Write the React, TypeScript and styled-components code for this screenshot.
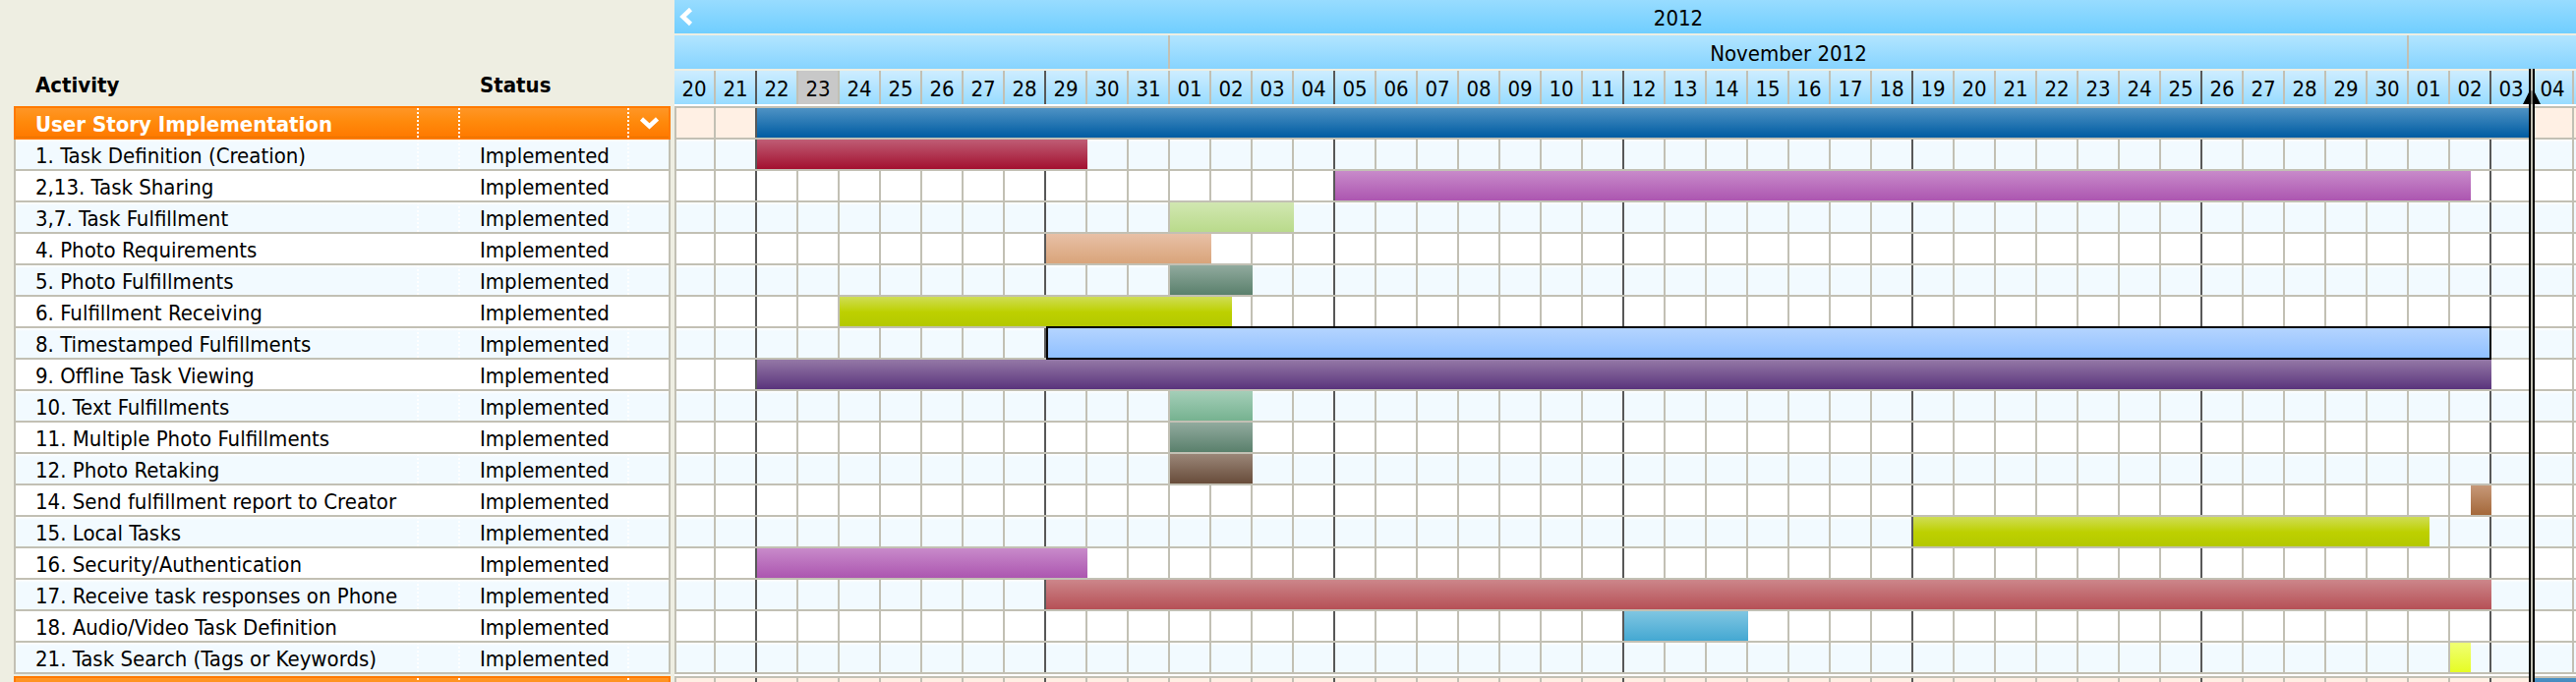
import React from 'react';
import styled, { createGlobalStyle } from 'styled-components';

const DAY = 42;
const LINE = '#c2c0b4';
const WEEK = '#585858';
const PAPER = '#eeeee2';
const GROUP = '#ff7a00';
const GROUP_FILL = 'linear-gradient(#ff9626, #ff8a0c 45%, #ff7a00 96%, #e87400 97%)';
const TINT_FILL = 'linear-gradient(#fff, #f2faff 3px)';

const Global = createGlobalStyle`
  * { box-sizing: border-box; }
  body {
    margin: 0;
    background: ${PAPER};
    color: #000;
    font: 22px/27px "DejaVu Sans Condensed", "DejaVu Sans", sans-serif;
    font-stretch: condensed;
  }
`;

const Page = styled.main`
  display: flex;
  align-items: flex-start;
  height: 100vh;
  overflow: hidden;
  padding-left: 14px;
`;

const Activities = styled.table`
  flex: none;
  width: 668px;
  margin-right: 4px;
  border-collapse: separate;
  border-spacing: 0;
  table-layout: fixed;
  td, th { padding: 0; text-align: left; white-space: nowrap; }
`;

const NameCol = styled.col`
  width: 410px;
`;

const GapCol = styled.col`
  width: 42px;
`;

const StatusCol = styled.col`
  width: 172px;
`;

const HeadCell = styled.th`
  height: 108px;
  vertical-align: bottom;
  font-weight: bold;
  && { padding: 0 0 8px 22px; }
`;

const GroupRow = styled.tr`
  height: 34px;
  color: #fff;
  font-weight: bold;
  td {
    background: ${GROUP_FILL};
    border: solid ${GROUP};
    border-width: 2px 0;
  }
  td:first-child { border-left-width: 2px; padding: 3px 0 0 20px; }
  td:last-child { border-right-width: 2px; }
  td + td {
    background-image: linear-gradient(#fff 50%, transparent 50%), ${GROUP_FILL};
    background-size: 2px 4px, 100% 100%;
    background-repeat: repeat-y, no-repeat;
  }
`;

const TaskRow = styled.tr<{ $tint: boolean }>`
  height: 32px;
  td {
    padding-top: 3px;
    background: ${p => (p.$tint ? TINT_FILL : '#fff')};
    border-bottom: 2px solid ${LINE};
  }
  td:first-child { border-left: 2px solid ${LINE}; padding-left: 20px; }
  td:nth-child(3) { padding-left: 22px; }
  td:last-child { border-right: 2px solid ${LINE}; }
  td + td {
    background-image: linear-gradient(#fff 50%, transparent 50%), ${p => (p.$tint ? TINT_FILL : 'none')};
    background-size: 2px 4px, 100% 100%;
    background-repeat: repeat-y, no-repeat;
  }
`;

const Spacer = styled.tr`
  height: 2px;
`;

const IconButton = styled.button<{ $wide?: boolean }>`
  display: flex;
  align-items: center;
  justify-content: center;
  width: ${p => (p.$wide ? 44 : 24)}px;
  height: 30px;
  padding: 0;
  border: 0;
  background: none;
  color: inherit;
  cursor: pointer;
`;

const Timeline = styled.section`
  position: relative;
  flex: 1;
  min-width: 0;
  overflow: hidden;
`;

const YearBar = styled.header`
  display: flex;
  align-items: center;
  height: 36px;
  background: linear-gradient(#98dcff, #70ceff);
  border-bottom: 2px solid ${PAPER};
`;

const YearLabel = styled.span`
  flex: 1;
  padding: 5px 0 2px 84px;
  text-align: center;
`;

const MonthBar = styled.div`
  display: flex;
  height: 36px;
  background: linear-gradient(#b2e5ff, #86d4ff);
  border-bottom: 2px solid ${PAPER};
`;

const Month = styled.div<{ $days: number }>`
  flex: none;
  width: ${p => p.$days * DAY}px;
  padding-top: 5px;
  border-right: 2px solid ${LINE};
  text-align: center;
`;

const DayBar = styled.div`
  display: flex;
  height: 36px;
  background: linear-gradient(#ceedff, #98dcff);
  border-bottom: 2px solid #fff;
`;

const Day = styled.div<{ $weekEnd: boolean; $today: boolean }>`
  flex: none;
  width: ${DAY}px;
  padding-top: 5px;
  background: ${p => (p.$today ? '#c8c8c8' : 'none')};
  border-right: 2px solid ${p => (p.$weekEnd ? WEEK : LINE)};
  text-align: center;
`;

const Lane = styled.div<{ $kind: 'group' | 'tint' | 'plain' }>`
  display: flex;
  height: ${p => (p.$kind === 'group' ? 34 : 32)}px;
  border: solid ${LINE};
  border-width: ${p => (p.$kind === 'group' ? 2 : 0)}px 0 2px 0;
  background:
    linear-gradient(90deg, transparent 82px, ${WEEK} 82px 84px, transparent 84px) 0 0 / 294px 100%,
    linear-gradient(90deg, transparent 40px, ${LINE} 40px) 0 0 / 42px 100%,
    ${p => ({ group: '#fff0e4', tint: TINT_FILL, plain: '#fff' })[p.$kind]};
  box-shadow: inset 2px 0 ${LINE};
`;

const Bar = styled.div<{ $from: number; $days: number; $fill: string; $selected?: boolean }>`
  flex: none;
  height: 30px;
  margin-left: ${p => p.$from * DAY}px;
  width: ${p => p.$days * DAY}px;
  background: linear-gradient(${p => p.$fill});
  ${p => p.$selected && `
    position: relative;
    height: 34px;
    margin-top: -2px;
    border: 2px solid #000;
  `}
`;

const Gap = styled.div`
  height: 2px;
  background: #fff;
`;

const Marker = styled.div`
  position: absolute;
  top: 70px;
  bottom: 0;
  left: ${45 * DAY - 4}px;
  width: 6px;
  background: ${LINE};
  border: solid #000;
  border-width: 0 2px;
`;

const MarkerArrow = styled.svg`
  position: absolute;
  top: 22px;
  left: -8px;
`;

const BLUE = '#4e92c4, #005ca2';
const LIME = '#cfdd55, #bdd000 52%, #b4c800';
const ORCHID = '#c88aca, #ac56b0';
const MOSS = '#91aa9e, #5a806c';

/* name, first day column, length in days, fill */
const tasks: [string, number, number, string][] = [
  ['1. Task Definition (Creation)', 2, 8, '#bf5d75, #a3102f'],
  ['2,13. Task Sharing', 16, 27.5, ORCHID],
  ['3,7. Task Fulfillment', 12, 3, '#d1e7b1, #b9da8b'],
  ['4. Photo Requirements', 9, 4, '#e8c0a6, #d9a47a'],
  ['5. Photo Fulfillments', 12, 2, MOSS],
  ['6. Fulfillment Receiving', 4, 9.5, LIME],
  ['8. Timestamped Fulfillments', 9, 35, '#b4d4ff, #90c0ff'],
  ['9. Offline Task Viewing', 2, 42, '#9478a6, #5a347c'],
  ['10. Text Fulfillments', 12, 2, '#a4ceb8, #76b290'],
  ['11. Multiple Photo Fulfillments', 12, 2, MOSS],
  ['12. Photo Retaking', 12, 2, '#9a8678, #684c3a'],
  ['14. Send fulfillment report to Creator', 43.5, 0.5, '#c69878, #a4683a'],
  ['15. Local Tasks', 30, 12.5, LIME],
  ['16. Security/Authentication', 2, 8, ORCHID],
  ['17. Receive task responses on Phone', 9, 35, '#cc868a, #b65056'],
  ['18. Audio/Video Task Definition', 23, 3, '#80c6e2, #44a8d2'],
  ['21. Task Search (Tags or Keywords)', 43, 0.5, '#f0ff74, #e6fc24'],
];

const days = Array.from({ length: 46 }, (_, i) => new Date(2012, 9, 20 + i).getDate());

const Chevron = ({ left }: { left?: boolean }) => (
  <svg width="20" height="20" viewBox="0 0 20 20" fill="none" stroke="#fff" strokeWidth="4.5" aria-hidden="true">
    <path d={left ? 'M14.5 2.5L6.5 10L14.5 17.5' : 'M2.5 6L10.5 13.5L18.5 6'} />
  </svg>
);

export default function App() {
  return (
    <>
      <Global />
      <Page>
        <Activities>
          <colgroup>
            <NameCol /><GapCol /><StatusCol /><col />
          </colgroup>
          <thead>
            <tr><HeadCell>Activity</HeadCell><th /><HeadCell>Status</HeadCell><th /></tr>
          </thead>
          <tbody>
            <GroupRow>
              <td>User Story Implementation</td><td /><td />
              <td><IconButton $wide aria-label="Collapse group"><Chevron /></IconButton></td>
            </GroupRow>
            {tasks.map(([name], i) => (
              <TaskRow key={name} $tint={i % 2 === 0}><td>{name}</td><td /><td>Implemented</td><td /></TaskRow>
            ))}
            <Spacer />
            <GroupRow><td /><td /><td /><td /></GroupRow>
          </tbody>
        </Activities>
        <Timeline>
          <YearBar>
            <IconButton aria-label="Earlier"><Chevron left /></IconButton>
            <YearLabel>2012</YearLabel>
          </YearBar>
          <MonthBar>
            <Month $days={12} /><Month $days={30}>November 2012</Month>
          </MonthBar>
          <DayBar>
            {days.map((d, i) => (
              <Day key={i} $weekEnd={i % 7 === 1} $today={i === 3}>{String(d).padStart(2, '0')}</Day>
            ))}
          </DayBar>
          <Lane $kind="group"><Bar $from={2} $days={43} $fill={BLUE} /></Lane>
          {tasks.map(([name, from, span, fill], i) => (
            <Lane key={name} $kind={i % 2 ? 'plain' : 'tint'}>
              <Bar $from={from} $days={span} $fill={fill} $selected={i === 6} />
            </Lane>
          ))}
          <Gap />
          <Lane $kind="group"><Bar $from={45} $days={2} $fill={BLUE} /></Lane>
          <Marker>
            <MarkerArrow width="18" height="14" viewBox="0 0 18 14" aria-hidden="true">
              <path d="M0 14L6 2V14ZM12 14V2L18 14Z" />
              <path d="M6 14V2L9 0L12 2V14Z" opacity="0.35" />
            </MarkerArrow>
          </Marker>
        </Timeline>
      </Page>
    </>
  );
}
